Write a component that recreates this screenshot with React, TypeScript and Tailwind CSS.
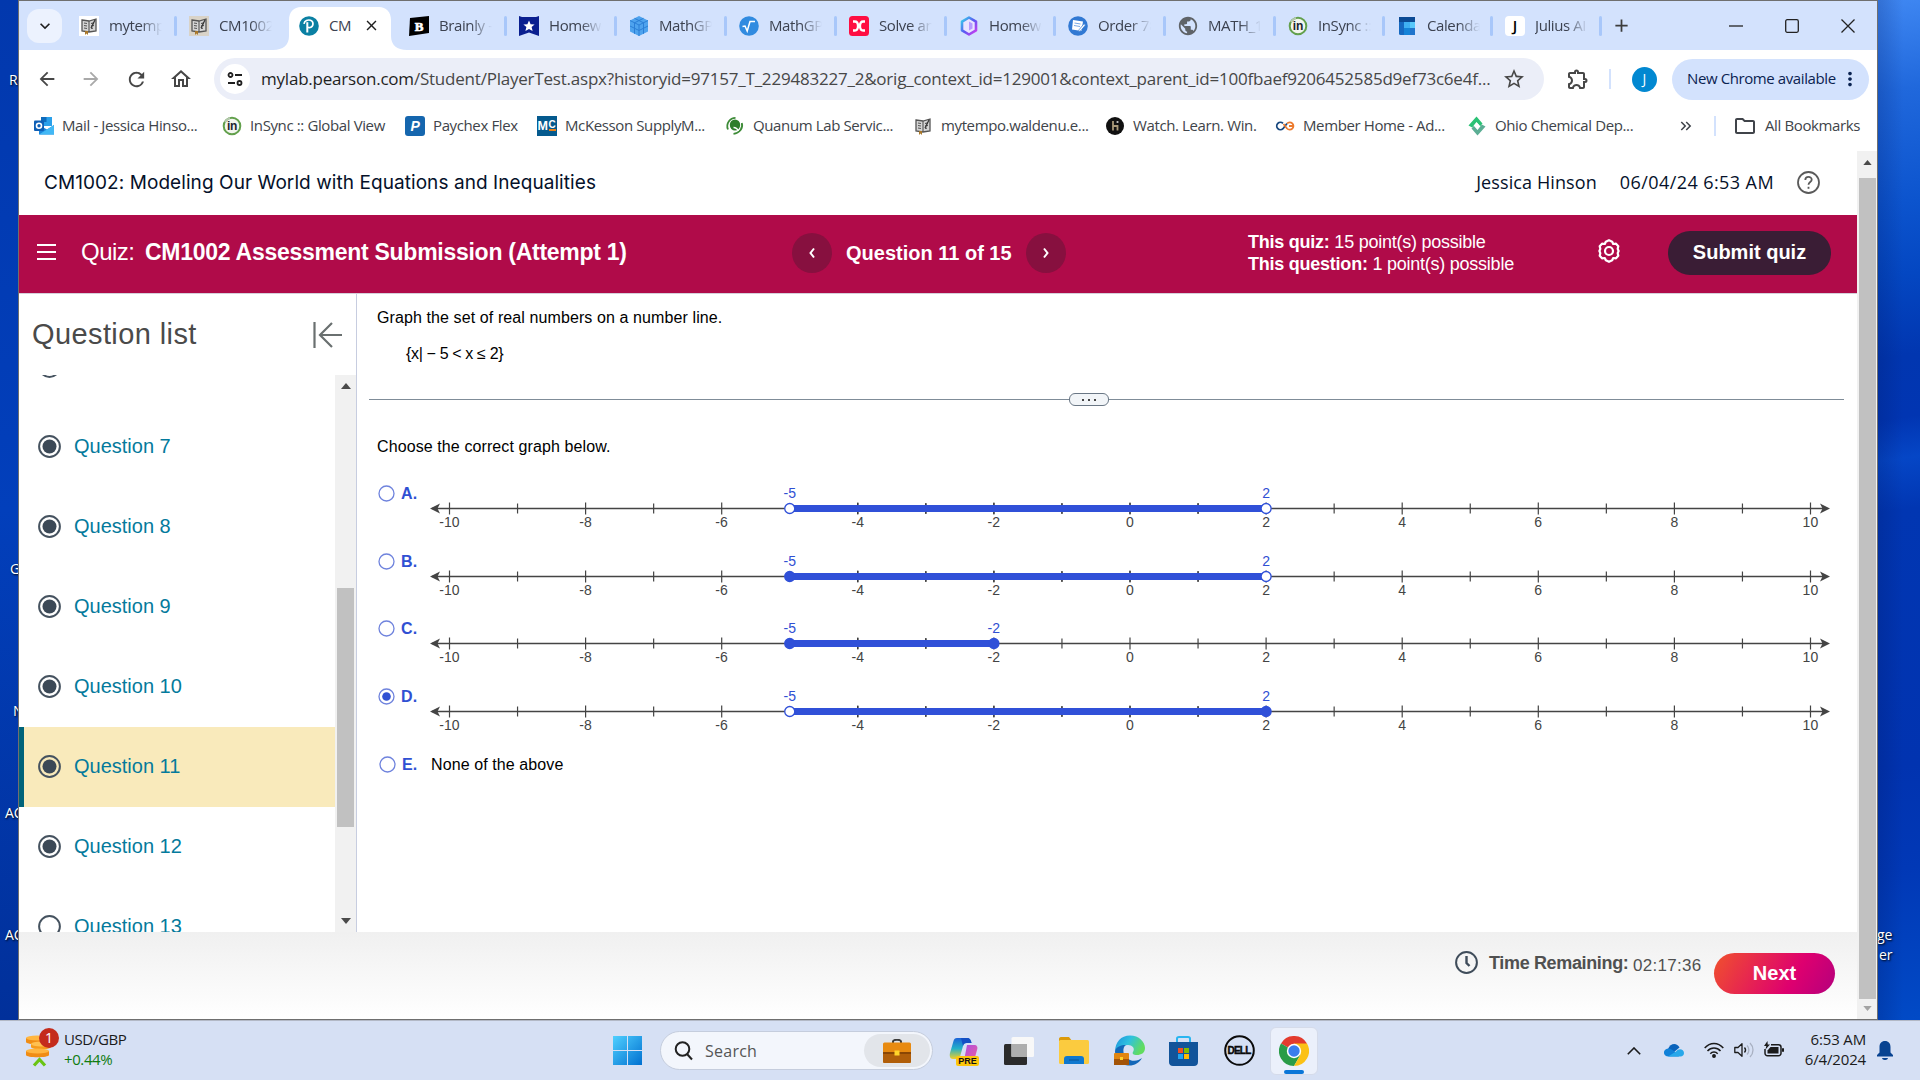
import type { ReactNode } from "react";
import {
  MdArrowBack,
  MdArrowForward,
  MdRefresh,
  MdOutlineHome,
  MdStarBorder,
  MdOutlineExtension,
  MdMoreVert,
  MdAdd,
  MdClose,
  MdKeyboardArrowDown,
  MdOutlineFolder,
  MdKeyboardDoubleArrowRight,
  MdPublic,
} from "react-icons/md";

type TabProp = {
  icon: ReactNode;
  title: string;
  divider?: boolean;
  width?: string;
};

type MarkProp = {
  icon: ReactNode;
  label: string;
  width: string;
};

type GraphProp = {
  letter: string;
  from: number;
  to: number;
  fromOpen: boolean;
  toOpen: boolean;
  checked?: boolean;
  height: string;
};

/* ---------- site icons ---------- */

function BookIcon({ tile = "#ffffff" }: { tile?: string }) {
  return (
    <svg className="w-5 h-5" viewBox="0 0 20 20">
      <rect width="20" height="20" fill={tile} />
      <path d="M3 4l7 1 7-2v12l-7 1-7-1z" fill="#d5d5d5" stroke="#555" strokeWidth="1.3" />
      <path d="M10 5v11M5 7l3 .5M5 9.500l3 .5M5 12l3 .5M12 7.500l3-.6M12 10l3-.6M12 12.500l2-.4" stroke="#555" strokeWidth="1.1" />
      <path d="M16 4l-4 8" stroke="#333" strokeWidth="1.3" />
      <path d="M6 15h3v4l-1.500-1.500L6 19z" fill="#a9782b" />
    </svg>
  );
}

function PearsonIcon() {
  return (
    <svg className="w-5 h-5" viewBox="0 0 20 20">
      <circle cx="10" cy="10" r="9.800" fill="#0b80a3" />
      <path d="M8.300 16.500V6.200" fill="none" stroke="#fff" strokeWidth="2" />
      <path d="M5 7.800C5.500 4.500 9 3.500 11.500 4.300c3.500 1.200 3.200 6.400-.3 7.200-1.200.3-2 0-2.600-.4" fill="none" stroke="#fff" strokeWidth="1.700" />
    </svg>
  );
}

function BrainlyIcon() {
  return (
    <svg className="w-5 h-5" viewBox="0 0 20 20">
      <path d="M1 2L20 0v17L0 20z" fill="#000" />
      <text x="10" y="14.500" textAnchor="middle" fontSize="13" fontWeight="700" fontFamily="Liberation Serif, serif" fill="#fff" stroke="#fff" strokeWidth=".6">B</text>
    </svg>
  );
}

function StarBadge() {
  return (
    <svg className="w-5 h-5" viewBox="0 0 20 20">
      <path d="M0 0l3 1h14l3-1v20l-10-3.500L0 20z" fill="#0a1f8f" />
      <path d="M10 4.500l1.600 3.700 4 .3-3 2.600 1 3.900-3.600-2.100L6.400 15l1-3.900-3-2.600 4-.3z" fill="#fff" />
    </svg>
  );
}

function CubeIcon() {
  return (
    <svg className="w-5 h-5" viewBox="0 0 20 20">
      <path d="M10 0l9 4.500v11L10 20l-9-4.500v-11z" fill="#4ea3ee" />
      <path d="M1 4.500l9 4.500 9-4.500M10 9v11M5.500 2.300l9 4.500v11M14.500 2.300l-9 4.500v11M1 10l9 4.500 9-4.500" stroke="#2b7fd6" fill="none" />
    </svg>
  );
}

function RootIcon() {
  return (
    <svg className="w-5 h-5" viewBox="0 0 20 20">
      <circle cx="10" cy="10" r="9.800" fill="#318be0" />
      <path d="M3.500 10.500L6 10l2.200 5L11 5.500h5" fill="none" stroke="#fff" strokeWidth="1.500" />
    </svg>
  );
}

function SolveIcon() {
  return (
    <svg className="w-5 h-5" viewBox="0 0 20 20">
      <rect width="20" height="20" rx="3.500" fill="#ff0e42" />
      <path d="M4 5.500h1.800c2.400 0 3.200 1.800 3.200 4.500s-.8 4.500-3.200 4.500H4M16 5.500h-1.800c-2.400 0-3.200 1.800-3.200 4.500s.8 4.500 3.200 4.500H16M8.500 10h3" fill="none" stroke="#fff" strokeWidth="2.300" />
    </svg>
  );
}

function HexIcon() {
  return (
    <svg className="w-5 h-5" viewBox="0 0 20 20">
      <defs>
        <linearGradient id="hex" x1="0" y1="0" x2="1" y2="1">
          <stop offset="0" stopColor="#35d6ea" />
          <stop offset=".5" stopColor="#5a58f2" />
          <stop offset="1" stopColor="#d63bf0" />
        </linearGradient>
      </defs>
      <path d="M10 1.500l7 4.200v8.600l-7 4.200-7-4.200V5.700z" fill="#e9e4ff" stroke="url(#hex)" strokeWidth="2.600" strokeLinejoin="round" />
      <path d="M10 5.500l3.500 2v5L10 14.500z" fill="#b69bff" />
    </svg>
  );
}

function OrderIcon() {
  return (
    <svg className="w-5 h-5" viewBox="0 0 20 20">
      <circle cx="10" cy="10" r="9.800" fill="#3179d3" />
      <path d="M5 4l10 1.500L13.500 15 4 13.500z" fill="#fff" />
      <path d="M6.500 7l6 1M6 9.500l6 1" stroke="#7aa9e4" />
      <path d="M17.500 9l-5 6-2 1 .6-2.300L16 7.800z" fill="#fff" stroke="#3179d3" strokeWidth=".7" />
    </svg>
  );
}

function InSyncIcon() {
  return (
    <svg className="w-5 h-5" viewBox="0 0 20 20">
      <circle cx="10" cy="10" r="8.300" fill="#f2f5ee" stroke="#62a04c" strokeWidth="2" />
      <path d="M3 6a8.300 8.300 0 0 1 5-4" stroke="#b5c9ae" strokeWidth="2" fill="none" />
      <text x="10" y="14" textAnchor="middle" fontSize="12" fontWeight="700" fontFamily="Liberation Sans, sans-serif" fill="#1b2430">in</text>
    </svg>
  );
}

function CalendarIcon() {
  return (
    <svg className="w-5 h-5" viewBox="0 0 20 20">
      <rect x="2" y="1" width="16" height="18" rx="1.500" fill="#1669c1" />
      <rect x="2" y="1" width="16" height="5" fill="#0b4a94" />
      <rect x="7" y="6" width="6" height="6" fill="#3fb0f2" />
      <rect x="13" y="6" width="5" height="6" fill="#58c8fa" />
      <rect x="7" y="12" width="6" height="7" fill="#1583d8" />
      <rect x="13" y="12" width="5" height="7" fill="#1f74cc" />
    </svg>
  );
}

function JuliusIcon() {
  return (
    <span className="w-5 h-5 rounded bg-white flex items-center justify-center text-[15px] leading-none text-black font-semibold">J</span>
  );
}

function OutlookIcon() {
  return (
    <svg className="w-5 h-5" viewBox="0 0 20 20">
      <path d="M7 1h11v9H7z" fill="#2aa0ea" />
      <path d="M7 1h5.500v5H7z" fill="#0f6cbd" />
      <path d="M5 9l8 4.500L20 9v9.500H5z" fill="#1a86dc" />
      <path d="M5 18.500L20 9v9.500z" fill="#42b8f5" />
      <rect y="4.500" width="10" height="10.500" rx="1" fill="#0f5fb5" />
      <circle cx="5" cy="9.700" r="2.500" fill="none" stroke="#fff" strokeWidth="1.600" />
    </svg>
  );
}

function PaychexIcon() {
  return (
    <svg className="w-5 h-5" viewBox="0 0 20 20">
      <rect width="20" height="20" rx="3" fill="#1566ae" />
      <text x="10" y="15" textAnchor="middle" fontSize="14" fontWeight="700" fontStyle="italic" fontFamily="Liberation Sans, sans-serif" fill="#fff">P</text>
    </svg>
  );
}

function McKessonIcon() {
  return (
    <svg className="w-5 h-5" viewBox="0 0 20 20">
      <rect width="20" height="20" fill="#055a8e" />
      <text x="0.500" y="14" fontSize="12.500" fontWeight="700" fontFamily="Liberation Sans, sans-serif" fill="#fff">M</text>
      <text x="11.500" y="11.500" fontSize="10" fontWeight="700" fontFamily="Liberation Sans, sans-serif" fill="#fff">C</text>
      <rect x="12" y="13" width="7" height="2" fill="#e8811a" />
    </svg>
  );
}

function QuanumIcon() {
  return (
    <svg className="w-5 h-5" viewBox="0 0 20 20">
      <ellipse cx="10" cy="9" rx="5.200" ry="5.600" fill="#2d7d2b" />
      <path d="M3 13.500C.5 7.500 5 1.800 10.500 1.800" fill="none" stroke="#3d8b37" strokeWidth="1.800" />
      <path d="M16.800 7c1.500 5-2 10-8.300 10.800" fill="none" stroke="#3d8b37" strokeWidth="1.800" />
      <path d="M8.500 11.500c2.500 0 4 1.500 5 3.500" stroke="#fff" strokeWidth="1.400" fill="none" />
    </svg>
  );
}

function WatchIcon() {
  return (
    <svg className="w-5 h-5" viewBox="0 0 20 20">
      <circle cx="10" cy="10" r="9" fill="#111" />
      <path d="M8 5v9.500M8 10h4.500v4.500" fill="none" stroke="#a89878" strokeWidth="1.800" />
      <path d="M12.500 5v2" stroke="#bbb" strokeWidth="1.800" />
    </svg>
  );
}

function MemberIcon() {
  return (
    <svg className="w-5 h-5" viewBox="0 0 20 20">
      <path d="M8 7.300A3.700 3.700 0 1 0 8 12.700L12 7.500" fill="none" stroke="#17477f" strokeWidth="1.800" />
      <path d="M12 7.500a3.700 3.700 0 1 1 0 5L8.500 8M14 10h4" fill="none" stroke="#ec7a2d" strokeWidth="1.800" />
    </svg>
  );
}

function OhioIcon() {
  return (
    <svg className="w-5 h-5" viewBox="0 0 20 20">
      <path d="M1.500 9.500L9.500 .5l6 7-2.300 2.800-3.700-4.300-4.300 5.500z" fill="#2bc275" />
      <path d="M18.500 10.500l-8 9-6-7 2.300-2.800 3.700 4.300 4.300-5.500z" fill="#5cae94" />
      <path d="M9.600 6.500l3.200 3.600-2.300 3-3.400-3.600z" fill="#fff" />
    </svg>
  );
}

/* ---------- browser ---------- */

const tabsBefore: TabProp[] = [
  { icon: <BookIcon />, title: "mytempo", divider: true },
  { icon: <BookIcon tile="#d9d3c8" />, title: "CM1002" },
];

const tabsAfter: TabProp[] = [
  { icon: <BrainlyIcon />, title: "Brainly -", divider: true },
  { icon: <StarBadge />, title: "Homewo", divider: true },
  { icon: <CubeIcon />, title: "MathGPT", divider: true },
  { icon: <RootIcon />, title: "MathGPT", divider: true },
  { icon: <SolveIcon />, title: "Solve an", divider: true },
  { icon: <HexIcon />, title: "Homewo", divider: true, width: "w-[109px]" },
  { icon: <OrderIcon />, title: "Order 78", divider: true },
  { icon: <MdPublic className="w-[22px] h-[22px] -mx-px text-[#5f6368]" />, title: "MATH_1", divider: true },
  { icon: <InSyncIcon />, title: "InSync ::", divider: true, width: "w-[109px]" },
  { icon: <CalendarIcon />, title: "Calendar", divider: true, width: "w-[108px]" },
  { icon: <JuliusIcon />, title: "Julius AI", divider: true, width: "w-[109px]" },
];

const bookmarks: MarkProp[] = [
  { icon: <OutlookIcon />, label: "Mail - Jessica Hinso...", width: "w-[188px]" },
  { icon: <InSyncIcon />, label: "InSync :: Global View", width: "w-[183px]" },
  { icon: <PaychexIcon />, label: "Paychex Flex", width: "w-[132px]" },
  { icon: <McKessonIcon />, label: "McKesson SupplyM...", width: "w-[188px]" },
  { icon: <QuanumIcon />, label: "Quanum Lab Servic...", width: "w-[188px]" },
  { icon: <BookIcon />, label: "mytempo.waldenu.e...", width: "w-[192px]" },
  { icon: <WatchIcon />, label: "Watch. Learn. Win.", width: "w-[170px]" },
  { icon: <MemberIcon />, label: "Member Home - Ad...", width: "w-[192px]" },
  { icon: <OhioIcon />, label: "Ohio Chemical Dep...", width: "w-[210px]" },
];

function Tab({ icon, title, divider, width = "w-[110px]" }: TabProp) {
  return (
    <div className={`${width} h-[49px] shrink-0 flex items-center pl-3`}>
      {icon}
      <p className="ml-2.5 w-[53px] mb-px overflow-hidden whitespace-nowrap text-[15px] tracking-[-0.4px] text-[#3c4250] [mask-image:linear-gradient(to_right,black_60%,transparent)]">{title}</p>
      {divider && <div className="w-[3px] h-5 ml-auto rounded-full bg-[#a8c7fa]" />}
    </div>
  );
}

function TabStrip() {
  return (
    <div className="h-[49px] shrink-0 bg-[#d3e2fd] flex items-center">
      <div className="w-[35px] h-[34px] ml-2 mr-[5px] shrink-0 rounded-xl bg-[#ecf2fe] flex items-center justify-center">
        <MdKeyboardArrowDown className="w-5 h-5 text-[#1f1f1f]" />
      </div>
      {tabsBefore.map((t) => <Tab key={t.title} {...t} />)}
      <div className="relative w-[110px] h-[49px] shrink-0">
        <svg className="absolute left-[-14px] top-[6px]" width="136" height="43" viewBox="0 0 136 43">
          <path d="M0 43c10 0 16-5 16-14V13C16 5 21 0 28 0h78c7 0 12 5 12 13v16c0 9 6 14 16 14z" fill="#fff" />
        </svg>
        <div className="relative h-full flex items-center pl-3">
          <PearsonIcon />
          <p className="ml-2.5 w-[22px] mb-px overflow-hidden whitespace-nowrap text-[15px] tracking-[-0.4px] text-[#3c4250]">CM</p>
          <MdClose className="ml-3 w-[17px] h-[17px] text-[#1f1f1f]" />
        </div>
      </div>
      {tabsAfter.map((t, i) => <Tab key={i} {...t} />)}
      <MdAdd className="ml-[9px] w-[21px] h-[21px] text-[#3c3c3c]" />
      <div className="ml-auto mr-[22px] flex items-center gap-[42px]">
        <svg className="w-[14px] h-4" viewBox="0 0 14 16"><path d="M0 8h14" stroke="#222" strokeWidth="1.300" /></svg>
        <svg className="w-[14px] h-4" viewBox="0 0 14 16"><rect x=".7" y="1.700" width="12.600" height="12.600" rx="1.500" fill="none" stroke="#222" strokeWidth="1.300" /></svg>
        <svg className="w-[14px] h-4" viewBox="0 0 14 16"><path d="M.5 1.500l13 13M13.500 1.500l-13 13" stroke="#222" strokeWidth="1.300" /></svg>
      </div>
    </div>
  );
}

function Toolbar() {
  return (
    <div className="h-[58px] shrink-0 flex items-center bg-white text-[#474747]">
      <MdArrowBack className="ml-[17px] w-[22px] h-[22px] shrink-0" />
      <MdArrowForward className="ml-[22px] w-[22px] h-[22px] shrink-0 text-[#a9a9a9]" />
      <MdRefresh className="ml-[23px] w-[23px] h-[23px] shrink-0" />
      <MdOutlineHome className="ml-[21px] w-6 h-6 shrink-0" />
      <div className="ml-[21px] w-[1330px] h-[42px] shrink-0 rounded-full bg-[#ebeef8] flex items-center pl-1.5">
        <div className="w-[30px] h-[30px] shrink-0 rounded-full bg-white flex items-center justify-center">
          <svg className="w-4 h-4" viewBox="0 0 16 16" fill="none" stroke="#1f1f1f" strokeWidth="1.800">
            <circle cx="3.500" cy="4" r="2" />
            <path d="M8 4h7M1 12h7" />
            <circle cx="12.500" cy="12" r="2" />
          </svg>
        </div>
        <p className="ml-[11px] w-[1232px] shrink-0 whitespace-nowrap text-[17px] tracking-[-0.215px]">
          <span className="text-[#1f1f1f]">mylab.pearson.com</span>/Student/PlayerTest.aspx?historyid=97157_T_229483227_2&amp;orig_context_id=129001&amp;context_parent_id=100fbaef9206452585d9ef73c6e4f...
        </p>
        <MdStarBorder className="ml-[9px] w-6 h-6 shrink-0" />
      </div>
      <MdOutlineExtension className="ml-[22px] w-6 h-6 shrink-0" />
      <div className="ml-[19px] w-0.5 h-5 bg-[#d3e2fd]" />
      <div className="ml-[21px] w-[25px] h-[25px] rounded-full bg-[#0288d1] text-white text-sm flex items-center justify-center">J</div>
      <div className="ml-[15px] w-[197px] h-[41px] rounded-full bg-[#d3e2fd] flex items-center pl-[15px] text-[#0b2351]">
        <p className="w-[152px] mb-px whitespace-nowrap text-[15px] tracking-[-0.4px]">New Chrome available</p>
        <MdMoreVert className="w-[22px] h-[22px]" />
      </div>
    </div>
  );
}

function BookmarksBar() {
  return (
    <div className="h-[43px] shrink-0 flex items-center bg-white pl-[15px] pb-[7px] text-[15px] tracking-[-0.38px] text-[#40444a]">
      {bookmarks.map((b) => (
        <div key={b.label} className={`${b.width} shrink-0 flex items-center gap-2 whitespace-nowrap`}>
          {b.icon}
          <p className="mb-px">{b.label}</p>
        </div>
      ))}
      <MdKeyboardDoubleArrowRight className="w-[18px] h-[18px]" />
      <div className="ml-[19px] w-0.5 h-5 bg-[#d3e2fd]" />
      <MdOutlineFolder className="ml-[17px] w-6 h-6" />
      <p className="ml-2 mb-px whitespace-nowrap">All Bookmarks</p>
    </div>
  );
}

/* ---------- course page ---------- */

function CourseHeader() {
  return (
    <div className="h-16 shrink-0 bg-white flex items-center pl-[25px] pr-[37px] pb-0.5 text-[#05112a]">
      <h1 className="mt-0.5 whitespace-nowrap font-[Inter,sans-serif] text-[19px] tracking-[0.07px]">CM1002: Modeling Our World with Equations and Inequalities</h1>
      <p className="ml-auto whitespace-nowrap text-[18px] tracking-[0.1px]">Jessica Hinson</p>
      <p className="ml-[23px] whitespace-nowrap text-[18px] tracking-[0.42px]">06/04/24 6:53 AM</p>
      <svg className="ml-[23px] w-[23px] h-[23px]" viewBox="0 0 23 23" fill="none" stroke="#5a5a5a" strokeWidth="1.800">
        <circle cx="11.500" cy="11.500" r="10.500" />
        <path d="M8.300 9c0-4.300 6.500-4 6.400-.3 0 2.300-3.200 2.300-3.200 5" />
        <path d="M11.500 15.800v2" />
      </svg>
    </div>
  );
}

function QuizBar() {
  return (
    <div className="h-[79px] shrink-0 bg-[#b00b49] border-b border-[#d5d0da] flex items-center pb-0.5 text-white font-[Liberation_Sans,Arial,sans-serif]">
      <div className="ml-[18px] w-[19px] flex flex-col gap-[5px] mb-0.5">
        <div className="h-0.5 bg-white" />
        <div className="h-0.5 bg-white" />
        <div className="h-0.5 bg-white" />
      </div>
      <p className="ml-[25px] mb-0.5 w-16 text-2xl tracking-[-0.5px]">Quiz:</p>
      <h2 className="w-[647px] mb-0.5 whitespace-nowrap text-[23px] font-bold tracking-[-0.27px]">CM1002 Assessment Submission (Attempt 1)</h2>
      <div className="w-10 h-10 rounded-full bg-[#87103f] flex items-center justify-center">
        <svg className="w-2 h-3" viewBox="0 0 8 12"><path d="M6 1.500L2.500 6 6 10.500" fill="none" stroke="#fff" strokeWidth="2" /></svg>
      </div>
      <p className="ml-[14px] w-[180px] whitespace-nowrap text-xl font-bold">Question 11 of 15</p>
      <div className="w-10 h-10 rounded-full bg-[#87103f] flex items-center justify-center">
        <svg className="w-2 h-3" viewBox="0 0 8 12"><path d="M2 1.500L5.500 6 2 10.500" fill="none" stroke="#fff" strokeWidth="2" /></svg>
      </div>
      <div className="ml-[182px] w-[349px] whitespace-nowrap text-[18px] leading-[22px] tracking-[-0.24px]">
        <p><b>This quiz:</b> 15 point(s) possible</p>
        <p><b>This question:</b> 1 point(s) possible</p>
      </div>
      <svg className="w-6 h-6 mb-[4px]" viewBox="0 0 24 24" fill="none" stroke="#fff" strokeWidth="2.200">
        <path d="M12 1.200l3.200 1.500 1 2.300 2.800-.3 2.300 2.600-.6 2.500.9 2.200-.9 2.200.6 2.500-2.300 2.600-2.800-.3-1 2.300-3.200 1.500-3.200-1.500-1-2.300-2.800.3-2.300-2.600.6-2.500-.9-2.200.9-2.200-.6-2.500L5 4.700l2.800.3 1-2.300z" strokeLinejoin="round" />
        <circle cx="12" cy="12" r="4" />
      </svg>
      <button className="ml-[47px] w-[163px] h-11 pb-0.5 rounded-full bg-[#3a1d35] text-xl font-bold whitespace-nowrap">Submit quiz</button>
    </div>
  );
}

function ListRadio({ filled }: { filled: boolean }) {
  return (
    <svg className="w-[23px] h-[23px] shrink-0" viewBox="0 0 23 23">
      <circle cx="11.500" cy="11.500" r="10.400" fill={filled ? "none" : "#fff"} stroke="#45525f" strokeWidth="2" />
      {filled && <circle cx="11.500" cy="11.500" r="7" fill="#3b4856" />}
    </svg>
  );
}

const questions = [7, 8, 9, 10, 11, 12, 13];

function Sidebar() {
  return (
    <div className="w-[338px] shrink-0 flex flex-col border-r border-[#c7cde0] font-[Liberation_Sans,Arial,sans-serif]">
      <div className="h-[81px] shrink-0 flex items-center justify-between pl-[13px] pr-[14px]">
        <h3 className="text-[29px] tracking-[0.4px] text-[#4a4a4a]">Question list</h3>
        <svg className="w-[29px] h-[26px]" viewBox="0 0 29 26" fill="none" stroke="#6a7070" strokeWidth="2.200">
          <path d="M1.500 0v26M29 13H7M19 1L7 13l12 12" />
        </svg>
      </div>
      <div className="flex-1 min-h-0 flex">
        <div className="flex-1 overflow-hidden">
          {/* the row scrolled past the top only leaves the foot of its marker */}
          <div className="h-8 pl-[19px] overflow-hidden">
            <div className="-mt-5">
              <ListRadio filled />
            </div>
          </div>
          {questions.map((q) => (
            <div key={q} className={`h-20 pb-0.5 flex items-center gap-[13px] text-xl text-[#047a9c] ${q === 11 ? "bg-[#f9eabb] border-l-[5px] border-[#00637a] pl-3.5" : "pl-[19px]"}`}>
              <ListRadio filled={q !== 13} />
              <p className="leading-6 pb-px">Question {q}</p>
            </div>
          ))}
        </div>
        <div className="w-[21px] bg-[#f1f1f1] flex flex-col items-center py-[8px]">
          <svg className="w-[10px] h-[6px]" viewBox="0 0 10 6"><path d="M0 6l5-6 5 6z" fill="#4a4a4a" /></svg>
          <div className="mt-[199px] w-[17px] h-[239px] bg-[#c1c1c1]" />
          <svg className="mt-auto w-[10px] h-[6px]" viewBox="0 0 10 6"><path d="M0 0l5 6 5-6z" fill="#4a4a4a" /></svg>
        </div>
      </div>
    </div>
  );
}

function Radio({ checked }: { checked?: boolean }) {
  return (
    <svg className="w-[17px] h-[17px] shrink-0" viewBox="0 0 17 17">
      <circle cx="8.500" cy="8.500" r="7.500" fill="#fff" stroke="#6f83dd" strokeWidth="1.300" />
      {checked && <circle cx="8.500" cy="8.500" r="4.300" fill="#3050d3" />}
    </svg>
  );
}

const ticks = Array.from({ length: 21 }, (_, i) => i - 10);
const xAt = (n: number) => 709 + n * 68.05;

function Graph({ letter, from, to, fromOpen, toOpen, checked, height }: GraphProp) {
  return (
    <div className={`${height} flex items-start pl-[21px]`}>
      <div className="w-[43px] h-[31px] flex items-center gap-[6px]">
        <Radio checked={checked} />
        <p className="font-bold text-base text-[#3050d3]">{letter}.</p>
      </div>
      <svg width="1420" height="66" viewBox="0 0 1420 66" fontFamily="Liberation Sans, Arial, sans-serif" fontSize="14" textAnchor="middle">
        <path d="M11 30.500H1406" stroke="#444" strokeWidth="1.400" />
        <path d="M9 30.500l10-5-2.500 5 2.500 5zM1409 30.500l-10-5 2.500 5-2.500 5z" fill="#444" />
        {ticks.map((n) => (
          <g key={n}>
            <path d={n % 2 === 0 ? `M${xAt(n)} 24.500v12` : `M${xAt(n)} 25.500v10`} stroke="#444" strokeWidth="1.200" />
            {n % 2 === 0 && <text x={xAt(n)} y="49" fill="#444">{n}</text>}
          </g>
        ))}
        <rect x={xAt(from)} y="27" width={xAt(to) - xAt(from)} height="7" fill="#3050d8" />
        {ticks.filter((n) => n > from && n < to).map((n) => (
          <path key={n} d={`M${xAt(n)} 25v2M${xAt(n)} 34v2`} stroke="#333" strokeWidth="1.200" />
        ))}
        <circle cx={xAt(from)} cy="30.500" r="5" fill={fromOpen ? "#fff" : "#3050d8"} stroke="#3050d8" strokeWidth="1.300" />
        <circle cx={xAt(to)} cy="30.500" r="5" fill={toOpen ? "#fff" : "#3050d8"} stroke="#3050d8" strokeWidth="1.300" />
        <text x={xAt(from)} y="20" fill="#3050d3">{from}</text>
        <text x={xAt(to)} y="20" fill="#3050d3">{to}</text>
      </svg>
    </div>
  );
}

function Question() {
  return (
    <div className="flex-1 min-w-0 bg-white text-black text-base tracking-[0.1px] font-[Liberation_Sans,Arial,sans-serif]">
      <p className="pl-5 pt-3">Graph the set of real numbers on a number line.</p>
      <p className="pl-[49px] pt-3 tracking-[-0.35px]">{"{x| − 5 < x ≤ 2}"}</p>
      <div className="ml-3 mr-[13px] mt-[27px] h-[13px] flex items-center">
        <div className="w-[700px] h-px bg-[#7f8c98]" />
        <div className="w-10 h-[13px] rounded-md border border-[#6a7785] bg-[#f2f5f8] flex items-center justify-center gap-1">
          <div className="w-0.5 h-0.5 bg-[#444]" />
          <div className="w-0.5 h-0.5 bg-[#444]" />
          <div className="w-0.5 h-0.5 bg-[#444]" />
        </div>
        <div className="flex-1 h-px bg-[#7f8c98]" />
      </div>
      <p className="pl-5 pt-[29px] pb-[19px]">Choose the correct graph below.</p>
      <Graph letter="A" from={-5} to={2} fromOpen toOpen height="h-[68px]" />
      <Graph letter="B" from={-5} to={2} fromOpen={false} toOpen height="h-[67px]" />
      <Graph letter="C" from={-5} to={-2} fromOpen={false} toOpen={false} height="h-[68px]" />
      <Graph letter="D" from={-5} to={2} fromOpen toOpen={false} checked height="h-[68px]" />
      <div className="h-[31px] flex items-center pl-[22px]">
        <Radio />
        <p className="ml-[6px] w-[29px] font-bold text-[#3050d3]">E.</p>
        <p>None of the above</p>
      </div>
    </div>
  );
}

function QuizFooter() {
  return (
    <div className="h-[87px] shrink-0 bg-linear-to-b from-[#f0f0f0] to-white flex justify-end pr-[22px] font-[Liberation_Sans,Arial,sans-serif] text-[#505050] whitespace-nowrap">
      <svg className="mt-[19px] w-[23px] h-[23px]" viewBox="0 0 23 23" fill="none" stroke="#3f4c5a" strokeWidth="2">
        <circle cx="11.500" cy="11.500" r="10.400" />
        <path d="M11.500 5v7l3 3" strokeWidth="2.400" />
      </svg>
      <p className="ml-[11px] mt-[18px] w-36 text-[18px] font-bold tracking-[-0.35px]">Time Remaining:</p>
      <p className="mt-[20px] w-[81px] text-[17px] leading-[27px] tracking-[0.3px]">02:17:36</p>
      <button className="mt-[21px] w-[121px] h-[41px] pb-0.5 rounded-full bg-linear-[120deg] from-[#f0512d] via-[#de006f] via-65% to-[#b4007d] text-white text-xl font-bold">Next</button>
    </div>
  );
}

function PageScroll() {
  return (
    <div className="w-[20px] shrink-0 bg-[#f1f1f1] flex flex-col items-center pt-[9px] pb-[8px]">
      <svg className="w-[9px] h-[5px]" viewBox="0 0 10 6"><path d="M0 6l5-6 5 6z" fill="#4a4a4a" /></svg>
      <div className="mt-[13px] w-[17px] h-[821px] bg-[#c1c1c1]" />
      <svg className="mt-auto w-[9px] h-[5px]" viewBox="0 0 10 6"><path d="M0 0l5 6 5-6z" fill="#a3a3a3" /></svg>
    </div>
  );
}

/* ---------- taskbar ---------- */

function Briefcase({ className }: { className: string }) {
  return (
    <svg className={className} viewBox="0 0 28 24">
      <path d="M10 4V2.500C10 1 11 .8 14 .8s4 .2 4 1.700V4" fill="none" stroke="#3a3a3a" strokeWidth="2" />
      <rect y="3.500" width="28" height="20.500" rx="1.500" fill="#e88a10" />
      <path d="M0 14h28v8.500a1.500 1.500 0 0 1-1.500 1.500h-25A1.500 1.500 0 0 1 0 22.500z" fill="#b05e0a" />
      <rect y="13" width="28" height="2" fill="#8a4604" />
      <rect x="11.500" y="11.500" width="5" height="5" fill="#ffd32a" />
    </svg>
  );
}

function Coins() {
  return (
    <svg className="absolute left-0 top-2" width="34" height="38" viewBox="0 0 34 38">
      <path d="M0 9v4c0 3 22 3 22 0V9z" fill="#f08c14" />
      <ellipse cx="11" cy="9" rx="11" ry="2.600" fill="#ffb640" />
      <path d="M5 15v3c0 3 20 3 20 0v-3z" fill="#f59a1c" />
      <ellipse cx="15" cy="15" rx="10" ry="2.400" fill="#ffc050" />
      <path d="M0 22v4c0 3 23 3 23 0v-4z" fill="#f08c14" />
      <ellipse cx="11.500" cy="22" rx="11.500" ry="2.600" fill="#ffb640" />
      <path d="M8 36.500l5.500-6 5.500 6" fill="none" stroke="#69c413" strokeWidth="3.200" />
    </svg>
  );
}

function Copilot() {
  return (
    <svg className="w-[30px] h-[30px]" viewBox="0 0 30 30">
      <defs>
        <linearGradient id="cpa" x1="0" y1="0" x2="0" y2="1">
          <stop offset="0" stopColor="#1b62d8" />
          <stop offset=".5" stopColor="#23b0c8" />
          <stop offset="1" stopColor="#f1cf2a" />
        </linearGradient>
        <linearGradient id="cpb" x1="0" y1="0" x2="1" y2="1">
          <stop offset="0" stopColor="#a64de8" />
          <stop offset="1" stopColor="#f0609a" />
        </linearGradient>
      </defs>
      <path d="M8 2h10c3 0 4 2 4.500 5h-5c-2 0-3 1-3.500 3l-2.500 9c-.8 3-2 4-4.500 4H4C1 23 .3 20 1 17L4.500 5C5 3 6 2 8 2z" fill="url(#cpa)" />
      <path d="M12 2h6c3 0 4 2 4.500 5h-5c-2 0-3 1-3.500 3z" fill="#144fc4" />
      <path d="M18 9h7c3 0 4 2 3 5l-2.500 9c-.5 2-2 3-4 3H12c3 0 3-2 3.500-4z" fill="url(#cpb)" />
      <rect x="7" y="20" width="23" height="10" rx="2" fill="#fdc60b" />
      <text x="18.500" y="28.300" textAnchor="middle" fontSize="9" fontWeight="700" fontFamily="Liberation Sans, sans-serif" fill="#111">PRE</text>
    </svg>
  );
}

function Edge() {
  return (
    <svg className="w-[31px] h-[31px]" viewBox="0 0 31 31">
      <defs>
        <linearGradient id="edge" x1="0" y1="0" x2="1" y2=".4">
          <stop offset="0" stopColor="#1c8fdc" />
          <stop offset=".5" stopColor="#2fc1df" />
          <stop offset="1" stopColor="#61dc5f" />
        </linearGradient>
      </defs>
      <path d="M1 17C1 7 7 .5 16 .5S31 7 31 13c0 5-4 7-8 7s-5-1.500-4-3c2.500-4-1-7-5-7C7 10 2 13 1 17z" fill="url(#edge)" />
      <path d="M1 16c1-4 6-6.500 11-6-4 2-4 12 4 15 5 2 9 0 12-2-3 5-8 8-14 7.500C6 30 1 24 1 16z" fill="#1367b8" />
      <rect y="18" width="15" height="12" rx="1" fill="#e08510" />
      <rect y="24" width="15" height="6" fill="#a35408" />
      <rect x="6" y="22" width="3" height="3" fill="#ffd32a" />
    </svg>
  );
}

function Chrome() {
  return (
    <svg className="w-[30px] h-[30px]" viewBox="0 0 30 30">
      <path d="M15 15L2 7.500A15 15 0 0 1 28 7.500z" fill="#e33b2e" />
      <path d="M15 15L2 7.500A15 15 0 0 0 15 30l6.500-11.200z" fill="#2a9c48" />
      <path d="M15 15l6.500 3.800L15 30A15 15 0 0 0 28 7.500H15z" fill="#fbc116" />
      <circle cx="15" cy="15" r="7.200" fill="#fff" />
      <circle cx="15" cy="15" r="5.700" fill="#3a7ded" />
    </svg>
  );
}

function Taskbar() {
  return (
    <div className="h-[60px] shrink-0 bg-[#d6e0f4] border-t border-[#b3b9c6] flex items-center text-[#1b1b1b] whitespace-nowrap">
      <div className="w-[613px] h-full shrink-0 flex items-center pl-[26px]">
        <div className="relative w-[38px] h-full">
          <Coins />
          <div className="absolute left-[13px] top-[7px] w-5 h-5 rounded-full bg-[#c42b1c] text-white text-sm flex items-center justify-center">1</div>
        </div>
        <div className="pb-1 text-[15px] leading-5 tracking-[-0.4px]">
          <p>USD/GBP</p>
          <p className="text-[#107c10]">+0.44%</p>
        </div>
      </div>
      <svg className="w-[29px] h-[29px]" viewBox="0 0 29 29">
        <defs>
          <linearGradient id="win" x1="0" y1="0" x2="1" y2="1">
            <stop offset="0" stopColor="#50d0ff" />
            <stop offset="1" stopColor="#0070d0" />
          </linearGradient>
        </defs>
        <path d="M0 0h14v14H0zM15 0h14v14H15zM0 15h14v14H0zM15 15h14v14H15z" fill="url(#win)" />
      </svg>
      <div className="ml-[18px] w-[273px] h-[39px] rounded-full bg-[#f3f6fc] border border-[#c5cddd] flex items-center pl-[13px] pr-[2px]">
        <svg className="w-[19px] h-5" viewBox="0 0 19 20" fill="none" stroke="#222" strokeWidth="2">
          <circle cx="8.500" cy="8" r="6.800" />
          <path d="M13 13l5 5.500" />
        </svg>
        <p className="ml-3 text-base text-[#555] tracking-[0.25px]">Search</p>
        <div className="ml-auto w-[66px] h-[33px] rounded-full bg-[#e2e5ea] flex items-center justify-center">
          <Briefcase className="w-7 h-6" />
        </div>
      </div>
      <div className="ml-4"><Copilot /></div>
      <svg className="ml-[25px] w-[30px] h-[28px]" viewBox="0 0 30 28">
        <rect y="7" width="23" height="21" rx="1.500" fill="#2b2b2b" />
        <rect x="7.500" width="22.500" height="20" rx="1.500" fill="#f8f8f8" />
        <rect x="7.500" y="7" width="15.500" height="13" fill="#aeaeae" />
      </svg>
      <svg className="ml-[25px] w-[30px] h-[27px]" viewBox="0 0 30 27">
        <path d="M0 2C0 1 .5 0 2 0h8l3 4H0z" fill="#dc9a0a" />
        <rect y="3" width="30" height="24" rx="1.500" fill="#fbcb3f" />
        <path d="M5 27v-5c0-2 1-3 3-3h14c2 0 3 1 3 3v5z" fill="#0f78cf" />
        <path d="M10 23h10" stroke="#0b5394" />
      </svg>
      <div className="ml-[25px]"><Edge /></div>
      <svg className="ml-6 w-[29px] h-[30px]" viewBox="0 0 29 30">
        <path d="M8 7V2.500C8 1.500 9 1 10 1h9c1 0 2 .5 2 1.500V7" fill="none" stroke="#29b5f0" strokeWidth="2" />
        <path d="M0 6h29v20c0 2.500-1.500 4-4 4H4c-2.500 0-4-1.500-4-4z" fill="#12549a" />
        <path d="M9 12h5v5H9z" fill="#f15022" />
        <path d="M15 12h5v5h-5z" fill="#7fba00" />
        <path d="M9 18h5v5H9z" fill="#22a4ee" />
        <path d="M15 18h5v5h-5z" fill="#ffb902" />
      </svg>
      <svg className="ml-[26px] w-[31px] h-[31px]" viewBox="0 0 31 31">
        <circle cx="15.500" cy="15.500" r="14.300" fill="none" stroke="#0a0a0a" strokeWidth="2" />
        <text x="15" y="19.200" textAnchor="middle" fontSize="10" fontWeight="700" letterSpacing="-.8" fontFamily="Liberation Sans, sans-serif" fill="#0a0a0a" stroke="#0a0a0a" strokeWidth=".4">DELL</text>
      </svg>
      <div className="relative ml-[15px] w-12 h-12 rounded-md bg-[#ebf0fb] border border-[#d5dbea] flex items-center justify-center">
        <Chrome />
        <div className="absolute bottom-0 w-5 h-1 rounded-full bg-[#0a76d8]" />
      </div>
      <svg className="ml-auto w-[14px] h-2" viewBox="0 0 14 8"><path d="M.8 7.200L7 1l6.200 6.200" fill="none" stroke="#1b1b1b" strokeWidth="1.600" /></svg>
      <svg className="ml-[23px] mb-0.5 w-5 h-[14px]" viewBox="0 0 20 14">
        <path d="M4 6C6 0 13-1 15.500 4.500L10 9z" fill="#0a63bb" />
        <path d="M4.500 13.500c-6 0-6-7.500-.5-8 3 0 5 2 8 4l3 4z" fill="#1181d8" />
        <path d="M4 13.500l8-5c3-4 8-2 8 1.500 0 2-1.500 3.500-3.500 3.500z" fill="#28a8ea" />
      </svg>
      <svg className="ml-5 mb-0.5 w-5 h-4" viewBox="0 0 20 16" fill="none" stroke="#1b1b1b" strokeWidth="1.500">
        <path d="M.7 6C6 0 14 0 19.300 6M3.500 9C7 5 13 5 16.500 9M6.300 11.800c2-2.300 5.400-2.300 7.400 0" />
        <circle cx="10" cy="14" r="1.200" fill="#1b1b1b" />
      </svg>
      <svg className="ml-2.5 w-5 h-4 mb-0.5" viewBox="0 0 20 16" fill="none" stroke="#1b1b1b" strokeWidth="1.300">
        <path d="M.8 5.500H4L8 1.700v12.600L4 10.500H.8z" strokeLinejoin="round" />
        <path d="M10.500 5.500c1.300 1.500 1.300 3.500 0 5" />
        <path d="M13 3.500c2.500 2.500 2.500 6.500 0 9M16 1c4 4 4 10 0 14" stroke="#a9b1c2" />
      </svg>
      <svg className="ml-2.5 mb-1 w-5 h-4" viewBox="0 0 20 16">
        <path d="M7 3.700h7.500A2.500 2.500 0 0 1 17 6.200v6a2.500 2.500 0 0 1-2.500 2.500h-11A2.500 2.500 0 0 1 1 12.200V8" fill="none" stroke="#1b1b1b" strokeWidth="1.500" />
        <path d="M6.500 6h8v6.500H3.500V9.500z" fill="#1b1b1b" />
        <rect x="18" y="7" width="2" height="4" rx="1" fill="#1b1b1b" />
        <path d="M3.500 0L0 5h2.300L1.500 8.500l4.500-5H3.700z" fill="#1b1b1b" />
      </svg>
      <div className="w-[82px] pb-1 text-right text-[15px] leading-5 tracking-[-0.15px]">
        <p>6:53 AM</p>
        <p>6/4/2024</p>
      </div>
      <svg className="ml-[11px] mr-[27px] w-4 h-[19px]" viewBox="0 0 16 19">
        <path d="M8 0c3.500 0 5.500 2.500 5.500 6v5.500L16 14v1.500H0V14l2.500-2.500V6C2.500 2.500 4.500 0 8 0z" fill="#084391" />
        <path d="M5 17h6c-.5 2.700-5.500 2.700-6 0z" fill="#084391" />
      </svg>
    </div>
  );
}

/* ---------- desktop ---------- */

function DesktopLeft() {
  return (
    <div className="w-[18px] shrink-0 overflow-hidden whitespace-nowrap bg-linear-to-b from-[#0238ad] via-[#023fbb] via-50% to-[#01309a] text-white text-[14px] leading-5 [text-shadow:1px_1px_2px_#000]">
      <p className="pl-[9px] mt-[70px]">R</p>
      <p className="pl-[10px] mt-[469px]">G</p>
      <p className="pl-[13px] mt-[122px]">N</p>
      <p className="pl-[5px] mt-[82px]">AC</p>
      <p className="pl-[5px] mt-[102px]">AC</p>
    </div>
  );
}

function DesktopRight() {
  return (
    <div className="w-[42px] shrink-0 overflow-hidden flex flex-col bg-[linear-gradient(to_right,rgba(0,20,90,0.2),transparent_60%),linear-gradient(172deg,#3f87f2_0%,#2068dc_9%,#0c54ce_20%,#0447c2_27%,#0136b0_35%,#0135b2_41%,#0546c6_45%,#0136b2_50%,#0133b0_75%,#0138b6_85%,#014ac6_100%)] text-white text-[14px] leading-5 [text-shadow:1px_1px_2px_#000]">
      <p className="mt-[925px] -ml-px">ge</p>
      <p className="pl-px">er</p>
    </div>
  );
}

function App() {
  return (
    <div className="w-[1920px] h-[1080px] overflow-hidden flex flex-col font-[Open_Sans,Noto_Sans,sans-serif]">
      <div className="h-[1020px] shrink-0 flex">
        <DesktopLeft />
        <div className="w-[1860px] shrink-0 flex flex-col border border-[#6f6f6f] bg-white">
          <TabStrip />
          <Toolbar />
          <BookmarksBar />
          <div className="flex-1 min-h-0 flex">
            <div className="flex-1 min-w-0 flex flex-col">
              <CourseHeader />
              <QuizBar />
              <div className="flex-1 min-h-0 flex">
                <Sidebar />
                <Question />
              </div>
              <QuizFooter />
            </div>
            <PageScroll />
          </div>
        </div>
        <DesktopRight />
      </div>
      <Taskbar />
    </div>
  );
}

export default App;
